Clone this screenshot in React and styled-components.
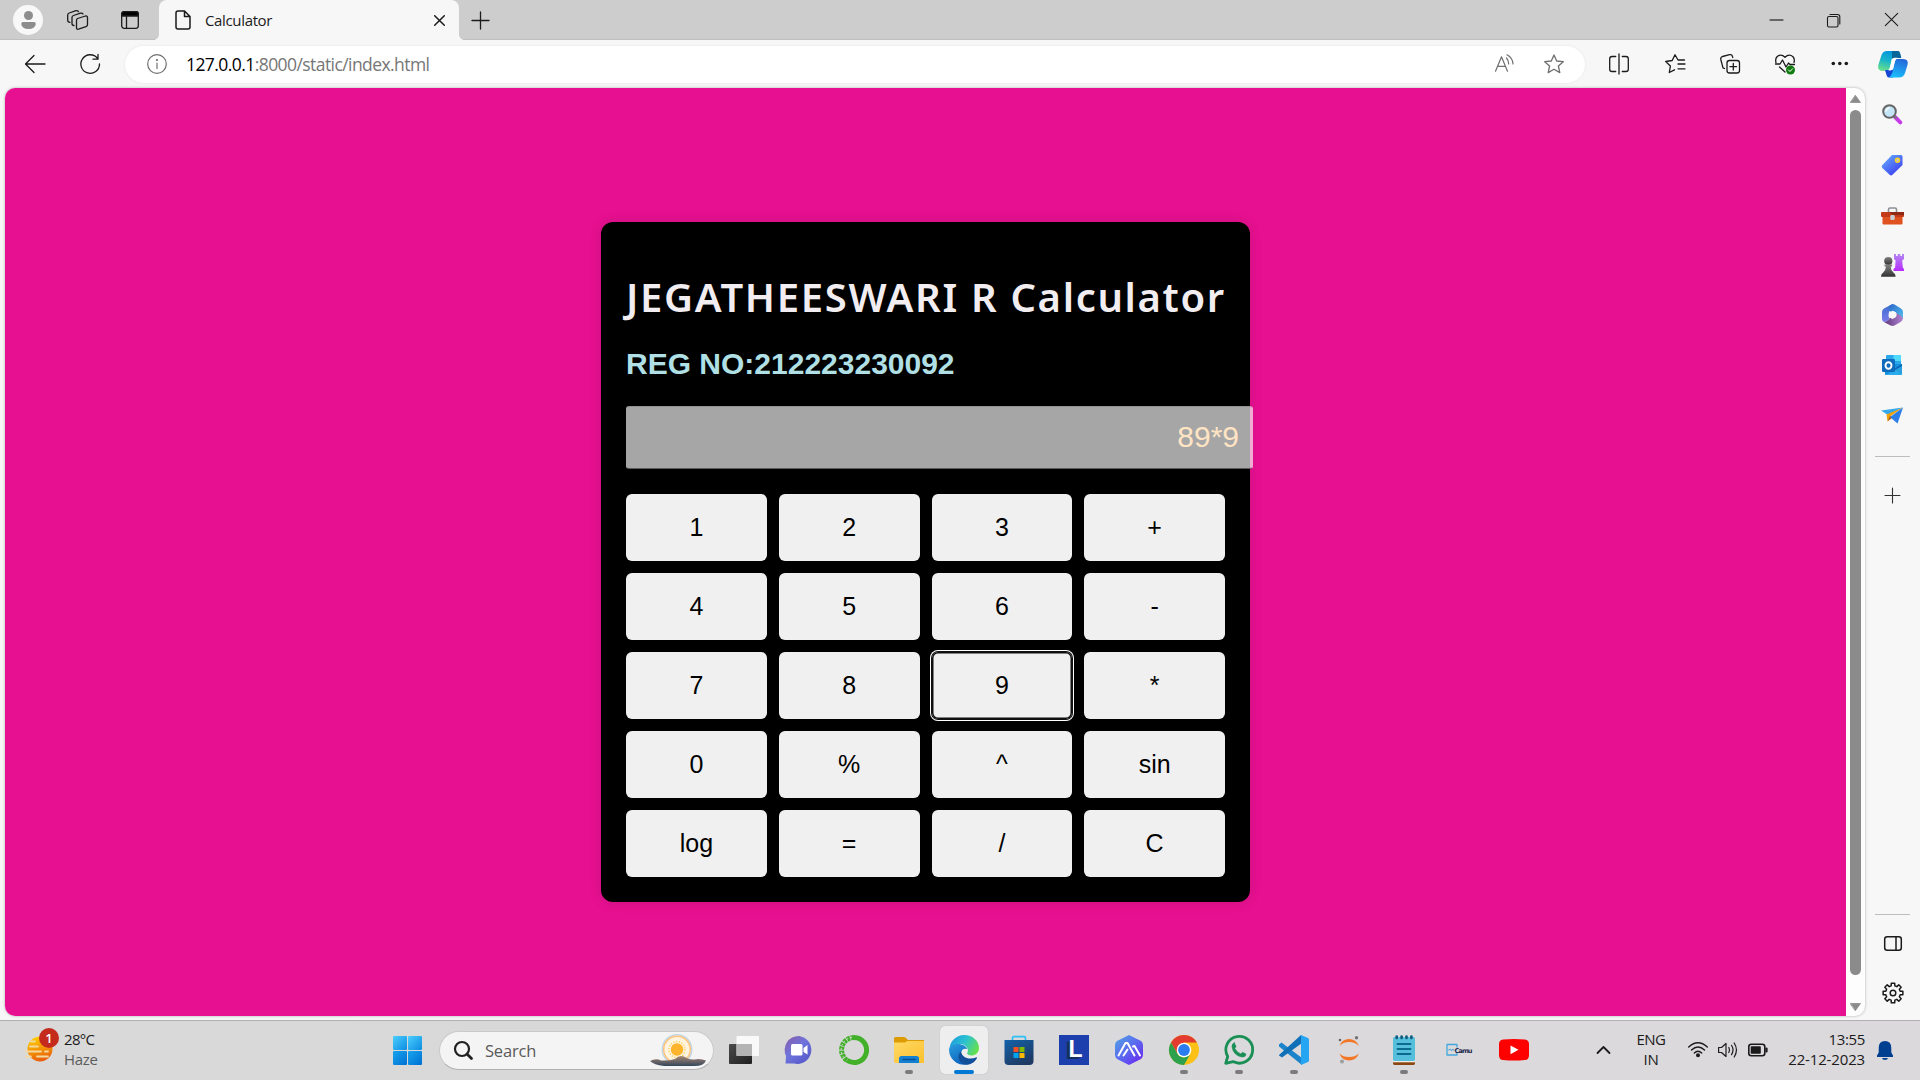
import React from "react";
import styled, { createGlobalStyle } from "styled-components";

const Global = createGlobalStyle`
  * { box-sizing: border-box; }
  body { margin: 0; overflow: hidden; }
`;

const ui = `"Open Sans", "Noto Sans", sans-serif`;
const arial = `"Liberation Sans", Arial, sans-serif`;

const Screen = styled.div`
  width: 1920px;
  height: 1080px;
  display: flex;
  flex-direction: column;
  background: #f7f7f7;
  font-family: ${ui};
  color: #1b1b1b;
  overflow: hidden;
`;

const Label = styled.span`
  font-size: ${(p) => p.$size || 15}px;
  line-height: ${(p) => p.$line || 20}px;
  letter-spacing: ${(p) => p.$track || 0}px;
  color: ${(p) => p.$color || "#1b1b1b"};
  white-space: pre;
`;

const Slot = styled.div`
  width: ${(p) => p.$w || 55}px;
  height: ${(p) => (p.$h ? p.$h + "px" : "100%")};
  flex: none;
  display: flex;
  align-items: center;
  justify-content: center;
  svg { display: block; overflow: visible; }
`;

/* ---------- tab strip ---------- */
const TabStrip = styled.header`
  height: 40px;
  flex: none;
  display: flex;
  background: #cdcdcd;
  box-shadow: inset 0 -1px 0 #bfbfbf;
`;
const Avatar = styled.div`
  width: 30px;
  height: 30px;
  border-radius: 50%;
  background: #f8f8f8;
  display: flex;
  align-items: center;
  justify-content: center;
`;
const Tab = styled.div`
  width: 300px;
  height: 41px;
  flex: none;
  display: flex;
  align-items: center;
  padding: 0 14px 1px 16px;
  background: #f7f7f7;
  border-radius: 8px 8px 0 0;
  position: relative;
  &::before, &::after {
    content: "";
    position: absolute;
    bottom: 1px;
    width: 5px;
    height: 5px;
  }
  &::before { left: -5px; background: radial-gradient(circle at 0 0, transparent 4.5px, #f7f7f7 5px); }
  &::after { right: -5px; background: radial-gradient(circle at 100% 0, transparent 4.5px, #f7f7f7 5px); }
`;
const TabTitle = styled(Label)`
  flex: 1;
  margin-left: 14px;
  padding-bottom: 1px;
`;
const Spacer = styled.div`
  flex: 1;
`;

/* ---------- toolbar ---------- */
const Toolbar = styled.nav`
  height: 48px;
  flex: none;
  display: flex;
  align-items: center;
  padding-left: 8px;
`;
const Address = styled.div`
  width: 1460px;
  height: 37px;
  margin: 0 7px 0 8px;
  display: flex;
  align-items: center;
  background: #fff;
  border-radius: 19px;
  box-shadow: 0 0 3px rgba(0, 0, 0, 0.08);
  padding-right: 6px;
`;
const Url = styled.div`
  display: flex;
  margin-left: -3px;
  padding-bottom: 1px;
`;

/* ---------- page ---------- */
const Middle = styled.div`
  height: 932px;
  flex: none;
  display: flex;
  padding-left: 5px;
`;
const Viewport = styled.div`
  width: 1860px;
  height: 928px;
  display: flex;
  border-radius: 10px;
  overflow: hidden;
  background: #fdfdfd;
  box-shadow: 0 0 3px rgba(0, 0, 0, 0.3);
`;
const Page = styled.main`
  width: 1841px;
  height: 928px;
  display: flex;
  align-items: center;
  justify-content: center;
  background: #e71090;
  padding-top: 20px;
`;
const ScrollTrack = styled.div`
  flex: 1;
  display: flex;
  flex-direction: column;
  align-items: center;
  padding: 7px 0 5px;
`;
const ScrollThumb = styled.div`
  width: 11px;
  height: 865px;
  margin: 7px 0 auto;
  border-radius: 6px;
  background: #8b8b8b;
`;

const Card = styled.section`
  width: 649px;
  height: 680px;
  padding: 48px 25px 25px;
  border-radius: 12px;
  background: #000;
  box-shadow: 0 0 13px rgba(0, 0, 0, 0.12);
  display: flex;
  flex-direction: column;
`;
const Title = styled.h1`
  margin: 0;
  height: 54px;
  font: 600 40px/54px "Noto Sans", "Open Sans", sans-serif;
  letter-spacing: ${(p) => p.$track}px;
  color: #f1edf0;
  white-space: nowrap;
`;
const RegNo = styled.h2`
  margin: 22px 0 25px;
  font: bold 30px/35px ${arial};
  color: #b0e0e6;
  white-space: nowrap;
`;
const Display = styled.div`
  width: 627px;
  height: 63px;
  flex: none;
  padding: 0 13px 2px;
  display: flex;
  align-items: center;
  justify-content: flex-end;
  border: 1px solid;
  border-color: rgba(110, 110, 110, 0.35) transparent rgba(40, 40, 40, 0.6);
  border-radius: 3px;
  background: rgba(255, 255, 255, 0.65);
  font: 30px/34px ${arial};
  color: #ffe4c4;
`;
const Keys = styled.div`
  margin-top: 25px;
  display: grid;
  grid-template-columns: repeat(4, 1fr);
  grid-auto-rows: 67px;
  gap: 12px;
`;
const Key = styled.button`
  border: 0;
  padding: 0;
  border-radius: 6px;
  background: #f0f0f0;
  color: #000;
  font: 25px/29px ${arial};
  box-shadow: ${(p) => (p.$focused ? "inset 0 0 0 1.5px #101010, 0 0 0 1px #101010, 0 0 0 2px #fff" : "none")};
`;

/* ---------- sidebar ---------- */
const Sidebar = styled.aside`
  width: 55px;
  height: 932px;
  display: flex;
  flex-direction: column;
  align-items: center;
  padding: 2px 1px 0 0;
`;
const Rule = styled.div`
  width: 35px;
  height: 1px;
  flex: none;
  background: #bdbdbd;
  margin: ${(p) => p.$m};
`;

/* ---------- taskbar ---------- */
const Taskbar = styled.footer`
  height: 60px;
  flex: none;
  display: flex;
  align-items: stretch;
  border-top: 1px solid #b0b0b1;
  background: linear-gradient(90deg, #d9d9d9, #d8d8d9 45%, #dbd9dc 70%);
`;
const Weather = styled.div`
  width: 379px;
  display: flex;
  padding-left: 25px;
`;
const WeatherIcon = styled.div`
  position: relative;
  width: 39px;
  padding-top: 13px;
  svg { display: block; overflow: visible; }
`;
const Badge = styled.span`
  position: absolute;
  left: 14px;
  top: 7px;
  width: 20px;
  height: 20px;
  border-radius: 50%;
  background: #c42b1c;
  color: #fff;
  font: 600 13px/20px ${ui};
  text-align: center;
`;
const Stack = styled.div`
  display: flex;
  flex-direction: column;
  justify-content: center;
  padding-bottom: 4px;
  align-items: ${(p) => p.$align || "flex-start"};
  width: ${(p) => p.$w || "auto"};
`;
const Search = styled.div`
  width: 275px;
  height: 39px;
  margin: 10px 0 0 3px;
  border-radius: 20px;
  background: #f4f4f4;
  border: 1px solid #c9c9c9;
  border-bottom-color: #b0b0b0;
  display: flex;
  align-items: center;
  padding: 0 7px 0 14px;
  svg { display: block; overflow: visible; }
`;
const SearchText = styled(Label)`
  flex: 1;
  margin-left: 12px;
`;
const Apps = styled.div`
  display: flex;
  margin-left: 3px;
`;
const AppButton = styled.div`
  width: 48px;
  height: 48px;
  margin: 5px 4px 0 3px;
  border-radius: 5px;
  background: ${(p) => (p.$active ? "#eeeeef" : "transparent")};
  box-shadow: ${(p) => (p.$active ? "0 0 1px rgba(0,0,0,.25)" : "none")};
  display: flex;
  flex-direction: column;
  align-items: center;
  padding-top: 9px;
  svg { display: block; overflow: visible; }
`;
const Indicator = styled.i`
  width: ${(p) => (p.$on === "active" ? 20 : 8)}px;
  height: 4px;
  margin-top: 5px;
  border-radius: 2px;
  background: ${(p) => (p.$on === "active" ? "#0078d4" : p.$on ? "#7b7a7c" : "transparent")};
`;
const Letter = styled.span`
  width: 30px;
  height: 30px;
  background: #1d3fad;
  color: #fff;
  font: bold 23px/28px ${arial};
  text-align: center;
  padding-left: 3px;
  text-shadow: -2px 1px 0 #14305c, -3px 2px 0 #14305c;
`;

/* ---------- icon helper ---------- */
const Icon = ({ w = 20, h, vb, sw = 1.3, c = "#1b1b1b", children }) => (
  <svg width={w} height={h || w} viewBox={vb || `0 0 ${w} ${h || w}`} fill="none" stroke={c} strokeWidth={sw} strokeLinecap="round" strokeLinejoin="round">
    {children}
  </svg>
);

const star = "M10 1 L12.700 7 L19.300 7.700 L14.400 12 L15.800 18.600 L10 15.300 L4.200 18.600 L5.600 12 L0.700 7.700 L7.300 7 Z";

const Magnifier = () => (
  <Icon w={20} h={22}>
    <path d="M13 13 L18.300 18.300" stroke="#c63bea" strokeWidth="4" />
    <path d="M12 12 L14 14" stroke="#777" strokeWidth="2" />
    <circle cx="7.500" cy="7.500" r="6.300" fill="#c4e5f8" stroke="#666" strokeWidth="2" />
    <path d="M4 7 A4 4 0 0 1 7 4" stroke="#fff" />
  </Icon>
);
const Tag = () => (
  <Icon w={22} sw={0}>
    <defs><linearGradient id="tg" x1="0" y1="0" x2=".8" y2="1"><stop stopColor="#67b5fb" /><stop offset="1" stopColor="#3a38f2" /></linearGradient></defs>
    <path d="M11 1 H20 Q21.500 1 21.500 2.500 V11 L11.500 20.800 Q10 22 8.600 20.800 L1.400 14 Q0 12.500 1.400 11 Z" fill="url(#tg)" />
    <circle cx="16.500" cy="6.300" r="2" fill="#b8c5d8" stroke="#ffd21c" strokeWidth="1.500" />
  </Icon>
);
const Toolbox = () => (
  <Icon w={23} h={16} sw={0}>
    <path d="M7.500 5 V2.500 Q7.500 1 9 1 H14 Q15.500 1 15.500 2.500 V5" stroke="#8b8f94" strokeWidth="1.600" />
    <rect x="1.500" y="8" width="20" height="9.500" rx="1.200" fill="#df5220" />
    <rect x="0" y="5" width="23" height="5" rx="1" fill="#c23a17" />
    <path d="M8 5 H23 V8 H12 Z" fill="#8f2814" />
    <rect x="9.300" y="8" width="4.400" height="5" rx="1.200" fill="#c8cdd2" />
  </Icon>
);
const Chess = () => (
  <Icon w={23} h={23} sw={0}>
    <defs><linearGradient id="ch" x1="0" y1="0" x2="0" y2="1"><stop stopColor="#b388f0" /><stop offset="1" stopColor="#b62cff" /></linearGradient>
      <linearGradient id="pw" x1="0" y1="0" x2="0" y2="1"><stop stopColor="#818181" /><stop offset="1" stopColor="#333" /></linearGradient></defs>
    <path d="M13 0 h2 v2 h1.700 V0 h2.600 v2 H21 V0 h2 v5 l-1.800 1.500 .6 7 1.200 1.500 v2 H12.500 v-2 l1.600-1.500 .5-7 L13 5 Z" fill="url(#ch)" />
    <circle cx="7.300" cy="7" r="4.100" fill="url(#pw)" />
    <path d="M3.500 10.500 h7.600 v2 h-1.500 q.3 4 3 6.200 q2 1.200 2 4 H0 q0-2.800 2-4 q2.700-2.200 3-6.200 H3.500 Z" fill="url(#pw)" />
  </Icon>
);
const Office = () => (
  <Icon w={21} h={22} sw={0}>
    <defs><linearGradient id="o1" x1="0" y1="0" x2="0" y2="1"><stop stopColor="#3b6ed0" /><stop offset="1" stopColor="#7a7bea" /></linearGradient>
      <linearGradient id="o2" x1="0" y1="0" x2="1" y2="1"><stop stopColor="#2b66c8" /><stop offset="1" stopColor="#53c2ee" /></linearGradient>
      <linearGradient id="o3" x1="0" y1="0" x2="1" y2="0"><stop stopColor="#5e3779" /><stop offset="1" stopColor="#b184d4" /></linearGradient></defs>
    <path d="M10.500 0 L2 4.500 Q0 5.500 0 8 V15 Q0 17 2 18 L4 17.500 Q8 16 7 13 L7 7 L12 2 Z" fill="url(#o1)" />
    <path d="M10.500 0 Q11.500 0 12.500 .5 L19 4.500 Q21 5.500 21 8 V15 Q20 13 17 11.500 L13 8 L7 7.300 V2 Z" fill="url(#o2)" />
    <path d="M21 14 Q21 16.500 19 17.700 L12.500 21.500 Q10.500 22.300 8.500 21.500 L2 18 Q7 17.500 8 13 L10.500 14 L13 12.500 L14 9 Q19.500 11.500 21 14 Z" fill="url(#o3)" />
    <path d="M7.500 9 L11 7.200 L14 9 V12.500 L10.500 14.600 L7.300 12.800 Z" fill="#f7f7f7" stroke="#f7f7f7" strokeWidth="1" />
  </Icon>
);
const Outlook = () => (
  <Icon w={20} sw={0}>
    <rect x="4" y="0" width="15" height="13" rx="1" fill="#28a8ea" />
    <rect x="11.500" y="0" width="7.500" height="6" fill="#50d9ff" />
    <path d="M3 9 H20 V19 Q20 20 19 20 H4 Q3 20 3 19 Z" fill="#1490df" />
    <path d="M20 9 L12 14 L20 19.500 Z" fill="#0a64b4" /><path d="M4 20 L20 11 V20 Z" fill="#35b8f1" opacity=".7" />
    <rect x="0" y="4" width="13" height="13" rx="1.200" fill="#0f6cbd" />
    <ellipse cx="6.500" cy="10.500" rx="3" ry="3.300" stroke="#fff" strokeWidth="1.900" />
  </Icon>
);
const Plane = () => (
  <Icon w={22} h={17} sw={0}>
    <path d="M0 3.500 L22 0.500 L7 8 Z" fill="#35a9ee" />
    <path d="M22 .5 L5.500 7.500 L6.500 14.500 L9 9.500 Z" fill="#f0a30a" />
    <path d="M6.500 14.500 L9 8.500 L11 11 Z" fill="#b35c05" />
    <path d="M22 .5 L9 10 L16.500 16.500 Z" fill="#2b7de9" />
  </Icon>
);
const Copilot = () => (
  <Icon w={30} h={27} sw={0}>
    <defs>
      <linearGradient id="c1" x1=".6" y1="0" x2=".3" y2="1"><stop stopColor="#0094e0" /><stop offset=".5" stopColor="#18b5c9" /><stop offset="1" stopColor="#6be08c" /></linearGradient>
      <linearGradient id="c2" x1=".7" y1="0" x2=".4" y2="1"><stop stopColor="#2466d8" /><stop offset="1" stopColor="#1bbdfb" /></linearGradient>
    </defs>
    <path d="M14 0 H20 Q21.500 0 22 2 L23 7 H18 L14 7 L12 16 Q11 19.500 8 19.500 L5 20 Q-1 20 .3 14 L3.500 4 Q5 0 9 0 Z" fill="url(#c1)" />
    <path d="M14 0 H20 Q21.500 0 22.300 3 L23.300 7 H18 Q15 7 14 10 Z" fill="#096699" />
    <path d="M7 19 H13 Q16 19 17 15 L15 26.500 H11 Q9 26.500 8.200 23 Z" fill="#1647d4" />
    <path d="M18.500 8 H25 Q31 8 29.500 14 L27 22 Q25.500 26.500 21 26.500 H11 Q13.500 25 14.500 21 L16.500 12 Q17 9 18.500 8 Z" fill="url(#c2)" />
    <path d="M14 8 Q15 6.700 17 6.700 H19.500 Q17.500 8 16.800 10.500 L15 17.500 Q14.200 19.500 12 19.500 H10.500 Q12 18 12.500 15 Z" fill="#fff" />
  </Icon>
);
const Windows = () => (
  <Icon w={29} sw={0}>
    <defs><linearGradient id="wn" x1="0" y1="0" x2="1" y2="1" gradientUnits="objectBoundingBox"><stop stopColor="#4cceff" /><stop offset="1" stopColor="#0c8ce0" /></linearGradient>
      <linearGradient id="wm" x1="0" y1="0" x2="1" y2="1"><stop stopColor="#18a5ee" /><stop offset="1" stopColor="#0070d2" /></linearGradient></defs>
    <rect width="14" height="14" rx="1" fill="url(#wn)" /><rect x="15" width="14" height="14" rx="1" fill="url(#wn)" />
    <rect y="15" width="14" height="14" rx="1" fill="url(#wm)" /><rect x="15" y="15" width="14" height="14" rx="1" fill="url(#wm)" />
  </Icon>
);
const Haze = () => (
  <Icon w={27} h={30} sw={0}>
    <defs><linearGradient id="hz" x1=".3" y1="0" x2=".6" y2="1"><stop stopColor="#ffd000" /><stop offset="1" stopColor="#e8590c" /></linearGradient></defs>
    <circle cx="15" cy="15" r="12.500" fill="url(#hz)" />
    <g stroke="#f3d9a0" strokeWidth="1.800"><path d="M6 7.500 H10" /><path d="M5 12.500 H13" /><path d="M1 17.500 H16 M20 17.500 H23" /><path d="M1 22.500 H6 M12 22.500 H23" /></g>
  </Icon>
);
const Sunrise = () => (
  <Icon w={56} h={33} sw={0}>
    <circle cx="27" cy="15.500" r="14.700" stroke="#c0d6e4" strokeWidth="1.500" />
    <circle cx="27" cy="15.500" r="13.300" stroke="#ffc47d" strokeWidth="1.500" fill="#fff4df" />
    <circle cx="27" cy="15.500" r="8" stroke="#ffd05c" strokeWidth="1.600" strokeDasharray="1.200 1.600" strokeLinecap="butt" />
    <circle cx="27" cy="15.500" r="6.200" fill="#fdb32b" />
    <defs><linearGradient id="mt" x1="0" y1="0" x2="0" y2="1"><stop stopColor="#a98674" /><stop offset="1" stopColor="#34475c" /></linearGradient></defs>
    <path d="M0 27 Q6 24 11 26.500 Q19 27 25 25 Q29 21 34 22.500 Q39 26 44 25.500 Q50 24 56 26.500 Q54 32 44 32 H14 Q4 31 0 27 Z" fill="url(#mt)" />
  </Icon>
);

const TaskView = () => (
  <Icon w={30} sw={0}>
    <defs><linearGradient id="tv" x1="0" y1="0" x2="1" y2="1"><stop stopColor="#4a4a4a" /><stop offset="1" stopColor="#202020" /></linearGradient></defs>
    <rect x="0" y="9" width="23" height="20" rx="1" fill="url(#tv)" />
    <rect x="7.500" y="1" width="22.500" height="20" rx="1" fill="#fff" opacity=".85" />
    <path d="M7.500 9 H23 V21 H7.500 Z" fill="#b4b4b4" />
  </Icon>
);
const Chat = () => (
  <Icon w={30} sw={0}>
    <defs><linearGradient id="ct" x1="0" y1="0" x2=".8" y2="1"><stop stopColor="#8a5da8" /><stop offset=".5" stopColor="#6f74dc" /><stop offset="1" stopColor="#5558c8" /></linearGradient></defs>
    <path d="M15 1 A14 14 0 1 1 10 28.500 H1.500 L2 21 A14 14 0 0 1 15 1 Z" fill="url(#ct)" />
    <rect x="7" y="9" width="11.500" height="11.500" rx="1.500" fill="#fff" /><path d="M19.500 13 L23.500 10 V19.500 L19.500 17 Z" fill="#fff" />
  </Icon>
);
const Anaconda = () => (
  <Icon w={30}>
    <path d="M15 2.500 A12.500 12.500 0 1 1 8 25.300" stroke="#43b02a" strokeWidth="5" strokeLinecap="butt" />
    <path d="M15 2.500 A12.500 12.500 0 0 0 8 25.300" stroke="#43b02a" strokeWidth="5" strokeLinecap="butt" strokeDasharray="3.200 .8" />
    <path d="M13 2.300 A12.700 12.700 0 0 0 5.500 23.500" stroke="#d9d9d9" strokeWidth="1" strokeLinecap="butt" strokeDasharray="2 2" />
  </Icon>
);
const Folder = () => (
  <Icon w={30} sw={0}>
    <defs><linearGradient id="fd" x1="0" y1="0" x2="1" y2="1"><stop stopColor="#ffd966" /><stop offset="1" stopColor="#fbc02d" /></linearGradient></defs>
    <path d="M0 3.500 Q0 2 1.500 2 H10 Q11.500 2 12.500 3.500 L14 5 H30 V9 H0 Z" fill="#dd9b04" />
    <path d="M0 7.500 H11 L13.500 6 H29 Q30 6 30 7 V28 H1.500 Q0 28 0 26.500 Z" fill="url(#fd)" />
    <path d="M5 28 V23.500 Q5 21 7.500 21 H22.500 Q25 21 25 23.500 V28 Z" fill="#1381d2" /><path d="M9 24.500 H21" stroke="#0a4f93" strokeWidth="1.300" />
  </Icon>
);
const Edge = () => (
  <Icon w={30} sw={0}>
    <defs>
      <linearGradient id="e1" x1="0" y1=".2" x2="1" y2=".6"><stop stopColor="#1d9ade" /><stop offset=".5" stopColor="#2cc3cf" /><stop offset="1" stopColor="#66e04c" /></linearGradient>
      <linearGradient id="e2" x1="0" y1="0" x2=".5" y2="1"><stop stopColor="#2a9fe0" /><stop offset="1" stopColor="#0d63bd" /></linearGradient>
    </defs>
    <path d="M.5 13 A15 15 0 0 1 15 0 C24 0 30 6 30 13 C30 18 26 20.500 22.500 20.500 C18.500 20.500 17.500 19 18.500 17 C20 14 17 9 11 9 C5 9 1 12 .5 13 Z" fill="url(#e1)" />
    <path d="M0 15 C0 11 5 8.500 10 9 C14.500 9.300 18.500 12 18.500 15.500 C18 13.500 12 13 12 19 C12 24 17 30 22 28 A15 15 0 0 1 0 15 Z" fill="url(#e2)" />
    <path d="M12.300 16 C7 20 10 30 18 29.700 C23 29.500 26.500 26 28 23 Q28 22 27 22.500 C20 25.500 12 22 12.300 16 Z" fill="#12509c" />
    <path d="M12.500 18 Q13 12.500 18.500 14 Q19 16 18 17.500 Q17.500 20 22 20.600 Q16 23 12.500 18 Z" fill="#eeeeef" />
  </Icon>
);
const Store = () => (
  <Icon w={30} sw={0}>
    <defs><linearGradient id="st" x1="0" y1="0" x2=".6" y2="1"><stop stopColor="#1263a9" /><stop offset="1" stopColor="#1f3a63" /></linearGradient></defs>
    <path d="M8.500 6 V3 Q8.500 1.700 10 1.700 H20 Q21.500 1.700 21.500 3 V6" stroke="#2cc0f5" strokeWidth="1.700" />
    <path d="M.5 5 H29.500 V26 Q29.500 30 25.500 30 H4.500 Q.5 30 .5 26 Z" fill="url(#st)" />
    <rect x="9.500" y="12" width="5" height="5" fill="#f25022" /><rect x="15.500" y="12" width="5" height="5" fill="#7fba00" />
    <rect x="9.500" y="18" width="5" height="5" fill="#00a4ef" /><rect x="15.500" y="18" width="5" height="5" fill="#ffb900" />
  </Icon>
);
const Hexa = () => (
  <Icon w={30} sw={0}>
    <defs><linearGradient id="hx" x1="0" y1="0" x2=".9" y2="1"><stop stopColor="#52a5e0" /><stop offset=".5" stopColor="#5a6cf0" /><stop offset="1" stopColor="#6b25f0" /></linearGradient></defs>
    <path d="M15 0 L27 6 Q29 7.500 29 10 V20 Q29 22.500 27 24 L15 30 L3 24 Q1 22.500 1 20 V10 Q1 7.500 3 6 Z" fill="url(#hx)" />
    <path d="M4.500 20.500 L11.500 8 H13.500 L20.500 20.500 M9.500 20.500 L13.500 14.500 M19 11.500 L20.500 11 L26 20.500" stroke="#fff" strokeWidth="2" />
  </Icon>
);
const Chrome = () => (
  <Icon w={30} sw={0}>
    <circle cx="15" cy="15" r="15" fill="#fbc116" />
    <path d="M2 7.500 A15 15 0 0 1 28 7.500 H15 L8.500 18.700 Z" fill="#e33b2e" />
    <path d="M2 7.500 L8.500 18.700 Q11 22.700 15.500 22.500 L21 19.500 L15 30 A15 15 0 0 1 2 7.500 Z" fill="#2da14c" />
    <circle cx="15" cy="15" r="7.300" fill="#fff" /><circle cx="15" cy="15" r="5.900" fill="#2c7cf0" />
  </Icon>
);
const WhatsApp = () => (
  <Icon w={30} c="#1a8f55" sw={2.8}>
    <path d="M1.700 28.300 L3.700 21.500 A13.400 13.400 0 1 1 9 26.600 Z" />
    <path d="M10.300 7.800 L12 11.500 L10.800 13.500 Q12.800 17.300 16.800 19 L18.500 17.300 L22 19 Q21.700 22.400 18 22 Q9.500 20.500 8 12 Q7.700 8.600 10.300 7.800 Z" fill="#1a8f55" strokeWidth=".6" />
  </Icon>
);
const VSCode = () => (
  <Icon w={30} sw={0}>
    <path d="M0 9.500 L2.500 7.500 L23 23 V30 L0 11.500 Z" fill="#1b84cb" />
    <path d="M0 20 L22 0 L23 8 L3 22.500 L0 20.500 Z" fill="#0f70b7" />
    <path d="M22 0 L29 3 Q30 3.500 30 4.500 V25.500 Q30 26.500 29 27 L22 30 Z" fill="#25a5f2" />
  </Icon>
);
const Jupyter = () => (
  <Icon w={30} sw={0}>
    <path d="M5.500 11 Q8 4 15 4 Q22 4 25 11 Q21 7 15 7 Q9 7 5.500 11 Z" fill="#f37726" />
    <path d="M5.500 18.500 Q8 25.500 15 25.500 Q22 25.500 25 18.500 Q21 22 15 22 Q9 22 5.500 18.500 Z" fill="#f37726" />
    <circle cx="6" cy="5" r="1.300" fill="#666" /><circle cx="22.500" cy="2.700" r="1.700" fill="#757575" /><circle cx="8" cy="26.500" r="2" fill="#9e9e9e" />
  </Icon>
);
const Notepad = () => (
  <Icon w={30} sw={0}>
    <path d="M4 24 H26 V28 Q26 30 24.500 30 H5.500 Q4 30 4 28 Z" fill="#8a4510" />
    <rect x="4" y="25" width="22" height="2.300" fill="#f2e9e0" />
    <rect x="4" y="2" width="22" height="24" rx="1.500" fill="#55bfdc" />
    <path d="M8.500 9 H21.500 M8.500 14 H21.500 M8.500 19 H21.500" stroke="#0b6a8f" strokeWidth="1.800" />
    <path d="M7.700 1.500 V3 M12.600 1.500 V3 M17.500 1.500 V3 M22.400 1.500 V3" stroke="#11597a" strokeWidth="2.600" />
  </Icon>
);
const Camu = () => (
  <Icon w={30} sw={0}>
    <path d="M13 12 V9.500 H3 V20 H13 V17.500" stroke="#43a7de" strokeWidth="1.300" />
    <path d="M4.500 15 L6.500 14 L7.500 16 L9 14 L10 15.500" stroke="#43a7de" strokeWidth="1" />
    <text x="10.500" y="17.700" fontFamily="DejaVu Sans" fontWeight="bold" fontSize="6.600" fill="#1f2a4d" textLength="18">Camu</text>
  </Icon>
);
const YouTube = () => (
  <Icon w={30} sw={0}>
    <path d="M4 4.500 Q15 3.500 26 4.500 Q30 5 30 9 V20 Q30 25 26 25 Q15 26 4 25 Q0 25 0 20 V9 Q0 5 4 4.500 Z" fill="#f00" />
    <path d="M11.500 10.500 L19.500 14.800 L11.500 19.200 Z" fill="#fff" />
  </Icon>
);
const Bell = () => (
  <Icon w={16} h={20} sw={0}>
    <path d="M8 0 Q14.300 0 14.300 7 V11.500 L16 14.500 V16 H0 V14.500 L1.700 11.500 V7 Q1.700 0 8 0 Z M5 17 H11 Q10.500 19 8 19 Q5.500 19 5 17 Z" fill="#033f91" />
  </Icon>
);

const apps = [
  [TaskView], [Chat], [Anaconda], [Folder, "open"], [Edge, "active"], [Store], [() => <Letter>L</Letter>], [Hexa],
  [Chrome, "open"], [WhatsApp, "open"], [VSCode, "open"], [Jupyter], [Notepad, "open"], [Camu], [YouTube],
];

const keys = ["1", "2", "3", "+", "4", "5", "6", "-", "7", "8", "9", "*", "0", "%", "^", "sin", "log", "=", "/", "C"];

const gear = (() => {
  const pts = [];
  for (let i = 0; i < 8; i++) {
    const a = (i * Math.PI) / 4;
    [[-0.25, 7.4], [-0.17, 10], [0.17, 10], [0.25, 7.4]].forEach(([d, r]) => {
      pts.push(`${(10 + r * Math.sin(a + d)).toFixed(2)} ${(10 - r * Math.cos(a + d)).toFixed(2)}`);
    });
  }
  return "M" + pts.join(" L") + " Z";
})();

export default function App() {
  return (
    <Screen>
      <Global />
      <TabStrip>
        <Slot $w={56}>
          <Avatar>
            <Icon w={15} h={18} sw={0}>
              <circle cx="7.500" cy="4.500" r="4.500" fill="#8d8d8d" />
              <path d="M2 11 H13 Q14.800 11 14.800 13 Q14 18 7.500 18 Q1 18 .2 13 Q.2 11 2 11 Z" fill="#8d8d8d" />
            </Icon>
          </Avatar>
        </Slot>
        <Slot $w={43}>
          <Icon w={21} h={20}>
            <path d="M10.500 8.500 L18.500 6 Q20.500 5.600 20.500 7.500 V14.500 Q20.500 16 19 16.700 L11.500 19.200 Q9.500 19.700 9.500 17.700 V10.500 Q9.500 9 10.500 8.500 Z" />
            <path d="M7 15.500 Q5 15.500 5 13.700 V7.500 Q5 6 6.500 5.500 L13.500 3.200 Q15.300 2.700 16 4" />
            <path d="M3 12.300 Q.7 12.300 .7 10.300 V5 Q.7 3.500 2.200 3 L9 .7 Q11 .3 11.500 1.700" />
          </Icon>
        </Slot>
        <Slot $w={60}>
          <Icon w={16} h={18}>
            <rect x=".7" y=".7" width="16.600" height="16.600" rx="2.500" />
            <path d="M.7 5 V3 Q.7 .7 3 .7 H15 Q17.300 .7 17.300 3 V5 Z" fill="#000" />
            <path d="M5.500 5 V17" />
          </Icon>
        </Slot>
        <Tab>
          <Icon w={16} h={20} sw={1.5}>
            <path d="M3 1 H9.500 L15 6.500 V17 Q15 19 13 19 H3 Q1 19 1 17 V3 Q1 1 3 1 Z M9.500 1 V6.500 H15" />
          </Icon>
          <TabTitle $size={15} $track={-0.35}>Calculator</TabTitle>
          <Icon w={11} sw={1.5}><path d="M.7 .7 L10.300 10.300 M10.300 .7 L.7 10.300" /></Icon>
        </Tab>
        <Slot $w={43}><Icon w={17}><path d="M8.500 0 V17 M0 8.500 H17" /></Icon></Slot>
        <Spacer />
        <Slot $w={57}><Icon w={13} sw={1}><path d="M0 6 H13" stroke="#000" /></Icon></Slot>
        <Slot $w={57}>
          <Icon w={13} sw={1.1}>
            <rect x=".5" y="2.500" width="10.500" height="10.500" rx="1.500" /><path d="M3 .5 H10.500 Q12.800 .5 12.800 2.800 V10" />
          </Icon>
        </Slot>
        <Slot $w={58}><Icon w={13} h={14} sw={1.1}><path d="M.3 .3 L12.700 12.700 M12.700 .3 L.3 12.700" /></Icon></Slot>
      </TabStrip>

      <Toolbar>
        <Slot $w={54}><Icon w={20} h={21}><path d="M20 10 H.8 M9 1.500 L.5 10 L9 18.500" /></Icon></Slot>
        <Slot $w={55}><Icon w={20}><path d="M17.500 4.300 A9.300 9.300 0 1 0 19.500 10 M18 .5 V5.200 H13" /></Icon></Slot>
        <Address>
          <Slot $w={64}>
            <Icon w={20} c="#6f6f6f" sw={1.2}><circle cx="10" cy="10" r="9.300" /><path d="M10 9 V14.500" /><circle cx="10" cy="6" r=".5" fill="#6f6f6f" /></Icon>
          </Slot>
          <Url>
            <Label $size={17.5} $line={26} $track={-0.57} $color="#000">127.0.0.1</Label>
            <Label $size={17.5} $line={26} $track={-0.57} $color="#767676">:8000/static/index.html</Label>
          </Url>
          <Spacer />
          <Slot $w={50}>
            <Icon w={20} c="#6f6f6f" sw={1.2}>
              <path d="M1.500 17.200 L7.500 2.800 L13.500 17.200 M3.700 12.300 H11.300" />
              <path d="M12.500 4 Q14.700 6.500 14.700 10 M13 .8 Q18.800 4 19 10" />
            </Icon>
          </Slot>
          <Slot $w={50}><Icon w={20} c="#6f6f6f"><path d={star} /></Icon></Slot>
        </Address>
        <Slot><Icon w={21} h={20}><path d="M10 0 V20 M6.700 2.500 H3 Q.7 2.500 .7 4.800 V15.200 Q.7 17.500 3 17.500 H6.700 M13.300 2.500 H17 Q19.300 2.500 19.300 4.800 V15.200 Q19.300 17.500 17 17.500 H13.300" /></Icon></Slot>
        <Slot><Icon w={20}><path d="M19.500 6 H13 L10 .8 L7.200 6.500 L.7 7.500 L5.400 12 L4.300 18.500 L9.500 15.800 M13 10 H20 M13 14.800 H20" /></Icon></Slot>
        <Slot>
          <Icon w={20}>
            <rect x="7" y="6.500" width="12.500" height="12.500" rx="2.500" /><path d="M13.300 9.500 V16 M10 12.700 H16.500" />
            <path d="M4.500 14.500 L3 13.800 L.8 5.500 Q.3 3.200 2.500 2.500 L9.500 .7 Q12 .2 12.500 2.500 L12.800 3.500" />
          </Icon>
        </Slot>
        <Slot>
          <Icon w={20}>
            <path d="M1 8.500 Q0 5 2 2.700 Q6 -.8 10 3.300 Q14 -.8 18 2.700 Q20 5 19 8.500 M.5 10 H5 L7.500 6 L11 13 L13.500 9 L15 10.500 H19.500 M4.500 13 L10 18" />
            <circle cx="15.500" cy="16" r="4.500" fill="#107c10" stroke="none" /><path d="M13.500 16 L15 17.500 L17.500 14.800" stroke="#fff" strokeWidth="1" />
          </Icon>
        </Slot>
        <Slot><Icon w={18} h={4} sw={0}><circle cx="2.300" cy="1.500" r="1.800" fill="#1b1b1b" /><circle cx="8.800" cy="1.500" r="1.800" fill="#1b1b1b" /><circle cx="15.300" cy="1.500" r="1.800" fill="#1b1b1b" /></Icon></Slot>
        <Slot $w={52}><Copilot /></Slot>
      </Toolbar>

      <Middle>
        <Viewport>
          <Page>
            <Card>
              <Title $track={1.66}>JEGATHEESWARI R Calculator</Title>
              <RegNo>REG NO:212223230092</RegNo>
              <Display>89*9</Display>
              <Keys>
                {keys.map((k) => <Key key={k} $focused={k === "9"}>{k}</Key>)}
              </Keys>
            </Card>
          </Page>
          <ScrollTrack>
            <Icon w={11} h={8} c="#8b8b8b" sw={0.8}><path d="M5.500 .5 L10.500 7.500 H.5 Z" fill="#8b8b8b" /></Icon>
            <ScrollThumb />
            <Icon w={11} h={8} c="#8b8b8b" sw={0.8}><path d="M.5 .5 H10.500 L5.500 7.500 Z" fill="#8b8b8b" /></Icon>
          </ScrollTrack>
        </Viewport>
        <Sidebar>
          {[Magnifier, Tag, Toolbox, Chess, Office, Outlook, Plane].map((I, i) => <Slot key={i} $w={54} $h={50}><I /></Slot>)}
          <Rule $m="16px 0 13px" />
          <Slot $w={54} $h={50}><Icon w={15} sw={1.1} c="#333"><path d="M7.500 0 V15 M0 7.500 H15" /></Icon></Slot>
          <Spacer />
          <Rule $m="0 0 3px" />
          <Slot $w={54} $h={50}><Icon w={17} h={15} sw={1.5}><rect x=".7" y=".7" width="16.600" height="13.600" rx="2.500" /><path d="M12 .7 V14.300" /></Icon></Slot>
          <Slot $w={54} $h={50}><Icon w={19} h={20} sw={1.5}><path d={gear} /><circle cx="10" cy="10" r="2.800" /></Icon></Slot>
          <Slot $w={54} $h={2} />
        </Sidebar>
      </Middle>

      <Taskbar>
        <Weather>
          <WeatherIcon><Haze /><Badge>1</Badge></WeatherIcon>
          <Stack>
            <Label $size={15} $track={-0.7}>28°C</Label>
            <Label $size={15} $track={-0.35} $color="#5c5c5c">Haze</Label>
          </Stack>
        </Weather>
        <Slot $w={57}><Windows /></Slot>
        <Search>
          <Icon w={19} sw={2.2} c="#202020"><circle cx="8" cy="8" r="7" /><path d="M13 13 L17.500 17.500" strokeWidth="2.800" /></Icon>
          <SearchText $size={16.5} $track={-0.2} $color="#5a5a5a">Search</SearchText>
          <Sunrise />
        </Search>
        <Apps>
          {apps.map(([I, on], i) => <AppButton key={i} $active={on === "active"}><I /><Indicator $on={on} /></AppButton>)}
        </Apps>
        <Spacer />
        <Slot $w={50}><Icon w={13} h={10} sw={1.8}><path d="M.5 7 L6.500 1 L12.500 7" /></Icon></Slot>
        <Stack $w="46px" $align="center">
          <Label $size={15} $track={-0.5}>ENG</Label>
          <Label $size={15} $track={-0.3}>IN</Label>
        </Stack>
        <Slot $w={48}>
          <Icon w={20} h={17} sw={1.4}><path d="M.7 5 Q10 -3.500 19.300 5 M3.500 8 Q10 1.800 16.500 8 M6.300 11 Q10 7.500 13.700 11" /><circle cx="10" cy="13.200" r="1.300" fill="#1b1b1b" /></Icon>
        </Slot>
        <Slot $w={12}>
          <Icon w={20} h={17} sw={1.2}><path d="M.6 5.500 H3.500 L8 1.500 V14.500 L3.500 10.500 H.6 Z M10.800 5.500 Q12.300 8 10.800 10.500 M13.500 3.300 Q16.500 8 13.500 12.700 M16.200 1 Q20.700 8 16.200 15" /></Icon>
        </Slot>
        <Slot $w={48}>
          <Icon w={20} h={13} sw={1.6}><rect x=".8" y=".3" width="16" height="11.400" rx="2.500" /><rect x="3.500" y="3" width="8.500" height="6" fill="#1b1b1b" /><path d="M18.500 4.500 V7.500" strokeWidth="2.200" /></Icon>
        </Slot>
        <Stack $w="83px" $align="flex-end">
          <Label $size={15} $track={-0.35}>13:55</Label>
          <Label $size={15} $track={-0.15}>22-12-2023</Label>
        </Stack>
        <Slot $w={40}><Bell /></Slot>
        <Slot $w={15} />
      </Taskbar>
    </Screen>
  );
}
